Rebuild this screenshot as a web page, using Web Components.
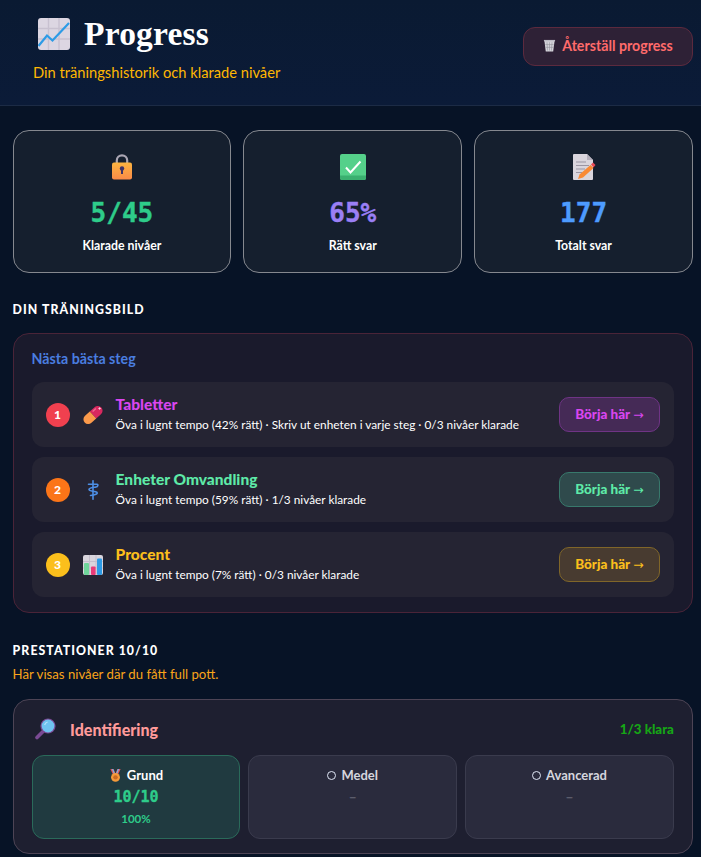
<!DOCTYPE html>
<html lang="sv">
<head>
<meta charset="utf-8">
<title>Progress</title>
<style>
html, body { margin: 0; padding: 0; background: #071326; }
body { font-family: Lato, sans-serif; color: #fff; }
main { display: block; padding: 24px 8.1px 0 12.6px; }
</style>
</head>
<body>
<pg-header heading="Progress" sub="Din träningshistorik och klarade nivåer" action="Återställ progress"></pg-header>
<main>
  <stat-row>
    <stat-card icon="lock" value="5/45" label="Klarade nivåer" color="#2ecc8a"></stat-card>
    <stat-card icon="check" value="65%" label="Rätt svar" color="#9a7ff5"></stat-card>
    <stat-card icon="memo" value="177" label="Totalt svar" color="#4d9bff"></stat-card>
  </stat-row>
  <section-title style="margin-top:28px">DIN TRÄNINGSBILD</section-title>
  <steps-panel heading="Nästa bästa steg">
    <step-row num="1" badge="#f0404f" icon="pill" name="Tabletter" color="#d946ef" btn-bg="#452a56" btn-border="#6f3485" info="Öva i lugnt tempo (42% rätt) · Skriv ut enheten i varje steg · 0/3 nivåer klarade"></step-row>
    <step-row num="2" badge="#fb7518" icon="medical" name="Enheter Omvandling" color="#5eeaa8" btn-bg="#2f4a4c" btn-border="#38796c" info="Öva i lugnt tempo (59% rätt) · 1/3 nivåer klarade"></step-row>
    <step-row num="3" badge="#fbbf1c" icon="bars" name="Procent" color="#fbbf1c" btn-bg="#483b30" btn-border="#806629" info="Öva i lugnt tempo (7% rätt) · 0/3 nivåer klarade"></step-row>
  </steps-panel>
  <section-title style="margin-top:29px">PRESTATIONER 10/10</section-title>
  <p style="margin:5px 0 0;font-size:13.2px;line-height:18px;color:#f9a51a">Här visas nivåer där du fått full pott.</p>
  <topic-card icon="magnifier" name="Identifiering" done="1/3 klara">
    <level-cell name="Grund" score="10/10" pct="100%" passed></level-cell>
    <level-cell name="Medel" score="–"></level-cell>
    <level-cell name="Avancerad" score="–"></level-cell>
  </topic-card>
</main>

<script>
// all the emoji are drawn by hand, there is no emoji font to count on
const ICONS = {
  chart: `<svg viewBox="0 0 32 32"><rect width="32" height="32" rx="3" fill="#dcd6e2"/><path d="M0 10.5h32M0 21h32M10.5 0v32M21 0v32" stroke="#c8c1d0" stroke-width="1.4"/><path d="M0.5 28L9 17.5l5.5 5L31 5" fill="none" stroke="#2d9be6" stroke-width="2.2"/></svg>`,
  trash: `<svg viewBox="0 0 14 14"><path d="M1.5 1.5h11L11 13.5H3z" fill="#d4d3da"/><path d="M1 1h12v1.6H1z" fill="#bdbcc5"/><path d="M4.3 3.5l.6 9M7 3.5v9M9.7 3.5l-.6 9M2.5 6h9M2.8 9h8.4" stroke="#8f8e98" stroke-width=".6"/></svg>`,
  lock: `<svg viewBox="0 0 20 26"><defs><linearGradient id="lk" x1="0" y1="0" x2="0" y2="1"><stop offset="0" stop-color="#fcb440"/><stop offset="1" stop-color="#f98a48"/></linearGradient></defs><path d="M4.8 12V6.5a5.2 5.2 0 0 1 10.4 0V12" fill="none" stroke="#aaa6b3" stroke-width="2.2"/><rect y="8.5" width="20" height="17" rx="2" fill="url(#lk)"/><circle cx="10" cy="14.5" r="2.2" fill="#3d3266"/><rect x="9" y="14.5" width="2" height="5.5" fill="#3d3266"/></svg>`,
  check: `<svg viewBox="0 0 26 26"><rect width="26" height="26" rx="2" fill="#55d08a"/><path d="M0 21.5h26V24a2 2 0 0 1-2 2H2a2 2 0 0 1-2-2z" fill="#3bb070"/><path d="M6 13.5l4.5 5L20.5 7.5" fill="none" stroke="#fff" stroke-width="2"/></svg>`,
  memo: `<svg viewBox="0 0 24 26"><path d="M1 1a1 1 0 0 1 1-1h13l6 6v19a1 1 0 0 1-1 1H2a1 1 0 0 1-1-1z" fill="#d9d5dd"/><path d="M15 0l6 6h-6z" fill="#b5b0bc"/><path d="M4 8h10M4 11.5h13M4 15h9M4 18.5h6" stroke="#9a95a3" stroke-width="1.1"/><path d="M18.5 11l3 3-10.5 9.5-5 1.5 1.5-4.5z" fill="#f98a35"/><path d="M19 10.5l2-2 2.5 2.5-2 2.5z" fill="#ea4a55"/></svg>`,
  pill: `<svg viewBox="0 0 20 20"><g transform="rotate(-42 10 10)"><path d="M10 5.2h6.4a4.8 4.8 0 0 1 0 9.6H10z" fill="#d8285f"/><path d="M10 5.2H3.6a4.8 4.8 0 0 0 0 9.6H10z" fill="#fb9a4b"/><path d="M12 7.2h4.5" stroke="#ef6a90" stroke-width="1.3"/></g><path d="M16.6 2.2v2.6M15.3 3.5h2.6" stroke="#f8d8e2" stroke-width=".8"/></svg>`,
  medical: `<svg viewBox="0 0 20 20"><g fill="none" stroke="#4d8fe6" stroke-width="1.6" stroke-linecap="round"><path d="M10 .8v18.4"/><path d="M5.5 4.2h8.5C15.5 4.2 15 6.6 13 7c-2.5.5-7 .6-7 2.6s6.5 1.2 8 2.8c1.2 1.4-2 2.6-6.5 3.1"/></g></svg>`,
  bars: `<svg viewBox="0 0 20 20"><rect width="20" height="20" rx="2" fill="#d9d5dd"/><path d="M0 6.5h20M0 13h20M6.5 0v20M13 0v20" stroke="#c5bfcc" stroke-width="1"/><rect x="1" y="8" width="5" height="12" rx="1" fill="#6fd59a"/><rect x="8" y="11.5" width="4.6" height="8.5" rx="1" fill="#e83a78"/><rect x="14" y="3.5" width="5" height="16.5" rx="1" fill="#2d9be6"/></svg>`,
  magnifier: `<svg viewBox="0 0 22 22"><path d="M8 13.5l-6 6" stroke="#7a4a94" stroke-width="3.6" stroke-linecap="round"/><circle cx="13" cy="8" r="7.6" fill="#7a4a94"/><circle cx="13" cy="8" r="6.4" fill="#6fc3f0"/><path d="M9.6 7a4 4 0 0 1 3-3" stroke="#b4e2f9" stroke-width="1.2" fill="none"/></svg>`,
  medal: `<svg viewBox="0 0 14 14"><path d="M1.5 0h3.5l2 5-2.5 1.5zM12.5 0H9L7 5l2.5 1.5z" fill="#e8505b"/><path d="M3 0h1.5l2 5-1 .8zM11 0H9.5l-2 5 1 .8z" fill="#6fb7e8"/><circle cx="7" cy="9" r="4.8" fill="#f49a3a"/><circle cx="7" cy="9" r="2.4" fill="#c96a22"/></svg>`
};

const BASE_FONT = `font-family:Lato,sans-serif;`;

class PgIcon extends HTMLElement {
  constructor() {
    super();
    this.attachShadow({ mode: 'open' });
  }
  connectedCallback() {
    const w = this.getAttribute('w') || 20;
    const h = this.getAttribute('h') || w;
    this.shadowRoot.innerHTML = `<style>
      :host { display: inline-flex; flex: none; width: ${w}px; height: ${h}px; }
      svg { width: 100%; height: 100%; display: block; }
    </style>${ICONS[this.getAttribute('name')] || ''}`;
  }
}

class PgHeader extends HTMLElement {
  constructor() {
    super();
    this.attachShadow({ mode: 'open' });
  }
  connectedCallback() {
    this.shadowRoot.innerHTML = `<style>
      :host { display: flex; box-sizing: border-box; height: 106px; justify-content: space-between; align-items: flex-start;
        padding: 0 8px 0 33px; background: linear-gradient(180deg, #0a1a32, #0b1b38); border-bottom: 1px solid #1c2b45; ${BASE_FONT} }
      .title { display: flex; align-items: center; gap: 14px; padding: 18px 0 0 5px; height: 32px; }
      h1 { margin: 0; font: 700 33.5px/32px "Liberation Serif", serif; color: #fff; letter-spacing: .2px; }
      p { margin: 12px 0 0; font-size: 14.7px; line-height: 20px; color: #ffb703; }
      button { display: flex; align-items: center; gap: 6px; box-sizing: border-box; width: 170px; height: 39px; margin-top: 27px; justify-content: center;
        background: #2e2136; border: 1px solid #5c2a3e; border-radius: 12px; color: #ff6b6b; font: 700 14.2px Lato, sans-serif; padding: 0 0 2px; }
    </style>
    <div>
      <div class="title"><pg-icon name="chart" w="32"></pg-icon><h1>${this.getAttribute('heading')}</h1></div>
      <p>${this.getAttribute('sub')}</p>
    </div>
    <button><pg-icon name="trash" w="13"></pg-icon>${this.getAttribute('action')}</button>`;
  }
}

class StatRow extends HTMLElement {
  constructor() {
    super();
    this.attachShadow({ mode: 'open' });
    this.shadowRoot.innerHTML = `<style>:host { display: grid; grid-template-columns: repeat(3, 1fr); gap: 12.2px; }</style><slot></slot>`;
  }
}

class StatCard extends HTMLElement {
  constructor() {
    super();
    this.attachShadow({ mode: 'open' });
  }
  connectedCallback() {
    this.shadowRoot.innerHTML = `<style>
      :host { display: flex; flex-direction: column; align-items: center; box-sizing: border-box; height: 143px; padding-top: 23px;
        background: #151f2e; border: 1px solid #85888f; border-radius: 16px; ${BASE_FONT} }
      .v { margin-top: 17px; font: 700 26px/32px "DejaVu Sans Mono", monospace; -webkit-text-stroke: .4px currentColor; color: ${this.getAttribute('color')}; }
      .l { margin-top: 8px; font-size: 12.3px; font-weight: 700; line-height: 18px; color: #fff; }
    </style>
    <pg-icon name="${this.getAttribute('icon')}" w="26" h="26"></pg-icon>
    <div class="v">${this.getAttribute('value')}</div>
    <div class="l">${this.getAttribute('label')}</div>`;
  }
}

class SectionTitle extends HTMLElement {
  constructor() {
    super();
    this.attachShadow({ mode: 'open' });
    this.shadowRoot.innerHTML = `<style>
      :host { display: block; font: 900 12.3px/18px Lato, sans-serif; letter-spacing: 1.05px; color: #fff; }
    </style><slot></slot>`;
  }
}

class StepsPanel extends HTMLElement {
  constructor() {
    super();
    this.attachShadow({ mode: 'open' });
  }
  connectedCallback() {
    this.shadowRoot.innerHTML = `<style>
      :host { display: block; box-sizing: border-box; margin-top: 14px; padding: 16px 18px 16px 18px; height: 280px;
        background: #1a1a2c; border: 1px solid #4a2438; border-radius: 16px; ${BASE_FONT} }
      h3 { margin: 0 0 14px; font-size: 14.2px; line-height: 18px; font-weight: 700; color: #4a7ee0; }
      .list { display: flex; flex-direction: column; gap: 10px; }
    </style>
    <h3>${this.getAttribute('heading')}</h3>
    <div class="list"><slot></slot></div>`;
  }
}

class StepRow extends HTMLElement {
  constructor() {
    super();
    this.attachShadow({ mode: 'open' });
  }
  connectedCallback() {
    const a = (n) => this.getAttribute(n);
    this.shadowRoot.innerHTML = `<style>
      :host { display: flex; align-items: center; box-sizing: border-box; height: 65px; padding: 0 14px; background: #252433; border-radius: 12px; ${BASE_FONT} }
      .n { flex: none; width: 24px; height: 24px; border-radius: 50%; background: ${a('badge')}; color: #fff; font-size: 12px; font-weight: 900; display: flex; align-items: center; justify-content: center; }
      pg-icon { margin: 0 13px 0 13px; }
      .txt { flex: 1; min-width: 0; padding-bottom: 1px; }
      .name { font-size: 15.5px; line-height: 19px; font-weight: 900; color: ${a('color')}; }
      .info { margin-top: 3px; font-size: 11.85px; line-height: 16px; color: #fff; white-space: nowrap; }
      button { flex: none; width: 101px; height: 35px; padding: 0 0 2px; background: ${a('btn-bg')}; border: 1px solid ${a('btn-border')}; border-radius: 10px;
        color: ${a('color')}; font: 900 13.5px Lato, sans-serif; }
      button span { font: 400 12.5px "DejaVu Sans", sans-serif; }
    </style>
    <div class="n">${a('num')}</div>
    <pg-icon name="${a('icon')}" w="20"></pg-icon>
    <div class="txt"><div class="name">${a('name')}</div><div class="info">${a('info')}</div></div>
    <button>Börja här <span>→</span></button>`;
  }
}

class TopicCard extends HTMLElement {
  constructor() {
    super();
    this.attachShadow({ mode: 'open' });
  }
  connectedCallback() {
    this.shadowRoot.innerHTML = `<style>
      :host { display: block; box-sizing: border-box; margin-top: 16px; height: 155px; padding: 18px 18px 0;
        background: #1e1f30; border: 1px solid #4d4455; border-radius: 16px; ${BASE_FONT} }
      .head { display: flex; align-items: center; height: 22px; margin-bottom: 15px; padding-left: 3px; }
      .nm { margin-left: 13.5px; font-size: 16px; font-weight: 900; color: #ff9a9a; flex: 1; }
      .dn { font-size: 13.3px; font-weight: 900; color: #16a516; }
      .cells { display: grid; grid-template-columns: repeat(3, 1fr); gap: 8px; }
    </style>
    <div class="head"><pg-icon name="${this.getAttribute('icon')}" w="22"></pg-icon><span class="nm">${this.getAttribute('name')}</span><span class="dn">${this.getAttribute('done')}</span></div>
    <div class="cells"><slot></slot></div>`;
  }
}

class LevelCell extends HTMLElement {
  constructor() {
    super();
    this.attachShadow({ mode: 'open' });
  }
  connectedCallback() {
    const passed = this.hasAttribute('passed');
    const mark = passed ? '<pg-icon name="medal" w="13"></pg-icon>' : '<span class="o"></span>';
    const pct = this.getAttribute('pct');
    this.shadowRoot.innerHTML = `<style>
      :host { display: flex; flex-direction: column; align-items: center; box-sizing: border-box; height: 84px; padding-top: 10px;
        border-radius: 12px; border: 1px solid ${passed ? '#2a6a5a' : '#3a3b4d'}; background: ${passed ? '#203a40' : '#2a2b3d'}; ${BASE_FONT} }
      .lbl { display: flex; align-items: center; gap: 5px; font-size: 13px; line-height: 18px; font-weight: 700; color: ${passed ? '#fff' : '#d5d6de'}; }
      .o { width: 7px; height: 7px; border: 1.2px solid #dfe6f5; border-radius: 50%; }
      .s { margin-top: 3px; font: 700 ${passed ? 15 : 9}px/20px "DejaVu Sans Mono", monospace; -webkit-text-stroke: .3px currentColor; color: ${passed ? '#2ecc8a' : '#5c5d6c'}; }
      .p { margin-top: 5px; font-size: 11.5px; line-height: 14px; font-weight: 700; color: #2ecc8a; }
    </style>
    <div class="lbl">${mark}<span>${this.getAttribute('name')}</span></div>
    <div class="s">${this.getAttribute('score')}</div>
    ${pct ? `<div class="p">${pct}</div>` : ''}`;
  }
}

customElements.define('pg-icon', PgIcon);
customElements.define('pg-header', PgHeader);
customElements.define('stat-row', StatRow);
customElements.define('stat-card', StatCard);
customElements.define('section-title', SectionTitle);
customElements.define('steps-panel', StepsPanel);
customElements.define('step-row', StepRow);
customElements.define('topic-card', TopicCard);
customElements.define('level-cell', LevelCell);
</script>
</body>
</html>
